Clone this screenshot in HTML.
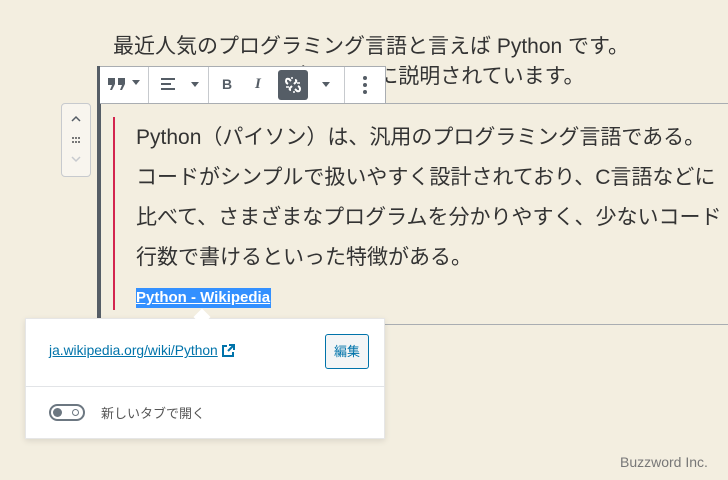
<!DOCTYPE html>
<html><head><meta charset="utf-8"><style>
*{margin:0;padding:0;box-sizing:border-box}
body{width:728px;height:480px;background:#f3eee0;position:relative;overflow:hidden;font-family:"Liberation Sans","Noto Sans CJK JP",sans-serif;color:#333}
.abs{position:absolute}
.p{left:113px;font-size:21px;color:#333;white-space:nowrap}
.q{left:136px;font-size:21px;color:#333;white-space:nowrap;line-height:40px}
</style></head><body>
<div class="abs p" style="top:30px">最近人気のプログラミング言語と言えば Python です。</div>
<div class="abs p" style="top:60px">Wikipedia によると次のように説明されています。</div>
<div class="abs" style="left:97px;top:66px;width:4px;height:252px;background:#555d66"></div>
<div class="abs" style="left:100px;top:103px;width:628px;height:1px;background:#a9adb2"></div>
<div class="abs" style="left:380px;top:324px;width:348px;height:1px;background:#a9adb2"></div>
<div class="abs" style="left:100px;top:66px;width:286px;height:38px;background:#fff;border:1px solid #a9adb2;border-left:none"></div>
<div class="abs" style="left:148px;top:67px;width:1px;height:36px;background:#c7cace"></div>
<div class="abs" style="left:208px;top:67px;width:1px;height:36px;background:#c7cace"></div>
<div class="abs" style="left:344px;top:67px;width:1px;height:36px;background:#c7cace"></div>
<svg class="abs" style="left:107px;top:77px" width="20" height="14" viewBox="0 0 20 14" fill="#555d66"><path d="M1 1h7v6l-3 6H3l2-5H1zM11 1h7v6l-3 6h-2l2-5h-4z"/></svg>
<div class="abs" style="left:132px;top:80px;width:0;height:0;border:4px solid transparent;border-top:5px solid #555d66"></div>
<div class="abs" style="left:161px;top:78px;width:14px;height:2px;background:#555d66"></div>
<div class="abs" style="left:161px;top:83px;width:10px;height:2px;background:#555d66"></div>
<div class="abs" style="left:161px;top:88px;width:14px;height:2px;background:#555d66"></div>
<div class="abs" style="left:191px;top:82px;border:4px solid transparent;border-top:5px solid #555d66"></div>
<div class="abs" style="left:222px;top:76px;font:bold 14px 'Liberation Sans';color:#555d66">B</div>
<div class="abs" style="left:255px;top:76px;font:italic bold 15px 'Liberation Serif';color:#555d66">I</div>
<div class="abs" style="left:278px;top:70px;width:30px;height:30px;background:#555d66;border-radius:3px"></div>
<svg class="abs" style="left:283px;top:75px" width="20" height="20" viewBox="0 0 20 20" fill="none" stroke="#fff" stroke-width="2"><path d="M8 6 L6 4 Q3 3 3 6 Q3 8 5 9 M12 14 L14 16 Q17 17 17 14 Q17 12 15 11 M9 11 L7 13 Q6 15 8 15 M11 9 L13 7 Q14 5 12 5"/><path d="M3 12h3M14 8h3M9 2v2M11 16v2" stroke-width="1.5"/></svg>
<div class="abs" style="left:322px;top:82px;border:4px solid transparent;border-top:5px solid #555d66"></div>
<div class="abs" style="left:363px;top:76px;width:4px;height:4px;border-radius:2px;background:#555d66;box-shadow:0 7px 0 #555d66,0 14px 0 #555d66"></div>
<div class="abs" style="left:61px;top:103px;width:30px;height:74px;border:1px solid #c7cace;border-radius:4px;background:#f8f5ee"></div>
<svg class="abs" style="left:66px;top:108px" width="20" height="64" viewBox="0 0 20 64" fill="none"><path d="M6 13l4-4 4 4" stroke="#555d66" stroke-width="1.5"/><path d="M6 49l4 4 4-4" stroke="#c7cace" stroke-width="1.5"/><g fill="#777"><rect x="6" y="29" width="2" height="2"/><rect x="9" y="29" width="2" height="2"/><rect x="12" y="29" width="2" height="2"/><rect x="6" y="33" width="2" height="2"/><rect x="9" y="33" width="2" height="2"/><rect x="12" y="33" width="2" height="2"/></g></svg>
<div class="abs" style="left:113px;top:117px;width:2px;height:193px;background:#d3254f"></div>
<div class="abs q" style="top:118px">Python（パイソン）は、汎用のプログラミング言語である。</div>
<div class="abs q" style="top:158px">コードがシンプルで扱いやすく設計されており、C言語などに</div>
<div class="abs q" style="top:198px">比べて、さまざまなプログラムを分かりやすく、少ないコード</div>
<div class="abs q" style="top:238px">行数で書けるといった特徴がある。</div>
<div class="abs" style="left:136px;top:288px;width:135px;height:20px;background:#3390ff"></div>
<div class="abs" style="left:136px;top:289px;font:bold 15px 'Liberation Sans';color:#fff;text-decoration:underline;white-space:nowrap">Python - Wikipedia</div>
<div class="abs" style="left:25px;top:318px;width:360px;height:121px;background:#fff;box-shadow:0 2px 6px rgba(0,0,0,.1);border:1px solid #e6e6e6"></div>
<div class="abs" style="left:196px;top:311px;width:12px;height:12px;background:#fff;transform:rotate(45deg)"></div>
<div class="abs" style="left:25px;top:386px;width:360px;height:1px;background:#e2e4e7"></div>
<div class="abs" style="left:49px;top:343px;font-size:13.8px;color:#0073aa;text-decoration:underline;white-space:nowrap">ja.wikipedia.org/wiki/Python</div>
<svg class="abs" style="left:221px;top:344px" width="14" height="14" viewBox="0 0 14 14" fill="none" stroke="#0073aa" stroke-width="2"><path d="M6 2H2v10h10V8"/><path d="M8 1h5v5M13 1L7 7"/></svg>
<div class="abs" style="left:325px;top:334px;width:44px;height:35px;border:1px solid #0073aa;border-radius:3px;background:#f3f5f6;font-size:13px;color:#0073aa;text-align:center;line-height:33px">編集</div>
<div class="abs" style="left:49px;top:404px;width:36px;height:17px;border:2px solid #6c7781;border-radius:9px"></div>
<div class="abs" style="left:53px;top:408px;width:9px;height:9px;border-radius:5px;background:#6c7781"></div>
<div class="abs" style="left:72px;top:409px;width:7px;height:7px;border-radius:4px;border:1.5px solid #6c7781"></div>
<div class="abs" style="left:101px;top:403px;font-size:13px;color:#555">新しいタブで開く</div>
<div class="abs" style="left:620px;top:454px;font-size:14px;color:#777;white-space:nowrap">Buzzword Inc.</div>
</body></html>
